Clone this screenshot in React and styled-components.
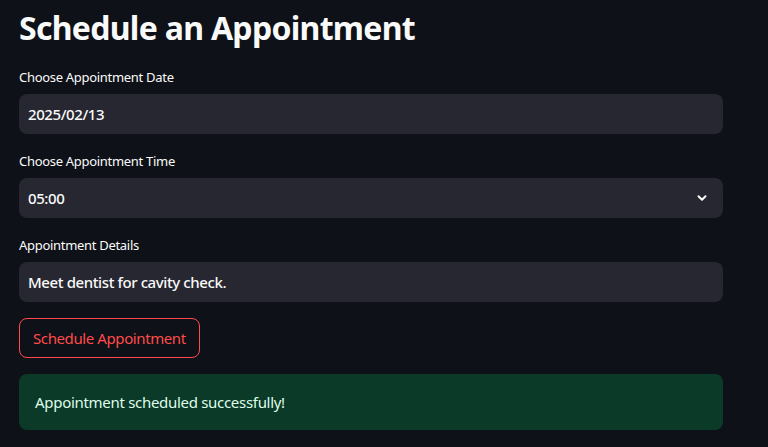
import styled, { createGlobalStyle } from "styled-components";

const Global = createGlobalStyle`
  html, body {
    margin: 0;
    background: #0e1117;
  }
  body {
    font-family: "Noto Sans", "Open Sans", sans-serif;
    color: #fafafa;
  }
`;

const Page = styled.div`
  width: 704px;
  padding: 0 19px;
  display: flex;
  flex-direction: column;
  gap: 16px;
`;

const Title = styled.h1`
  margin: 0;
  height: 50px;
  padding-top: 4px;
  box-sizing: border-box;
  font-size: 32px;
  font-weight: 700;
  line-height: 48px;
  letter-spacing: -0.7px;
  color: #fafafa;
`;

const Field = styled.div`
  display: flex;
  flex-direction: column;
  gap: 6px;
`;

const Label = styled.label`
  height: 22px;
  font-size: 13px;
  line-height: 23px;
  letter-spacing: -0.3px;
  color: #fafafa;
`;

const Box = styled.div`
  height: 40px;
  box-sizing: border-box;
  padding: 0 9px;
  border-radius: 8px;
  background: #262730;
  display: flex;
  align-items: center;
  justify-content: space-between;
  font-size: 15px;
  font-weight: 500;
  letter-spacing: -0.4px;
  color: #fafafa;
`;

const Chevron = styled.svg`
  width: 14px;
  height: 14px;
  margin-right: 5px;
`;

const Button = styled.button`
  align-self: flex-start;
  height: 40px;
  padding: 0 13px;
  border: 1px solid #ff4b4b;
  border-radius: 8px;
  background: transparent;
  font-family: inherit;
  font-size: 15px;
  letter-spacing: -0.4px;
  color: #ff4b4b;
`;

const Alert = styled.div`
  height: 56px;
  box-sizing: border-box;
  padding: 0 16px;
  border-radius: 8px;
  background: #0c3a28;
  display: flex;
  align-items: center;
  font-size: 15px;
  letter-spacing: -0.3px;
  color: #dffde9;
`;

export default function App() {
  return (
    <>
      <Global />
      <Page>
        <Title>Schedule an Appointment</Title>
        <Field>
          <Label>Choose Appointment Date</Label>
          <Box>2025/02/13</Box>
        </Field>
        <Field>
          <Label>Choose Appointment Time</Label>
          <Box>
            05:00
            <Chevron viewBox="0 0 24 24" fill="none" stroke="#fafafa" strokeWidth="3.4" strokeLinecap="round" strokeLinejoin="round">
              <path d="M6 9l6 6 6-6" />
            </Chevron>
          </Box>
        </Field>
        <Field>
          <Label>Appointment Details</Label>
          <Box>Meet dentist for cavity check.</Box>
        </Field>
        <Button>Schedule Appointment</Button>
        <Alert>Appointment scheduled successfully!</Alert>
      </Page>
    </>
  );
}
